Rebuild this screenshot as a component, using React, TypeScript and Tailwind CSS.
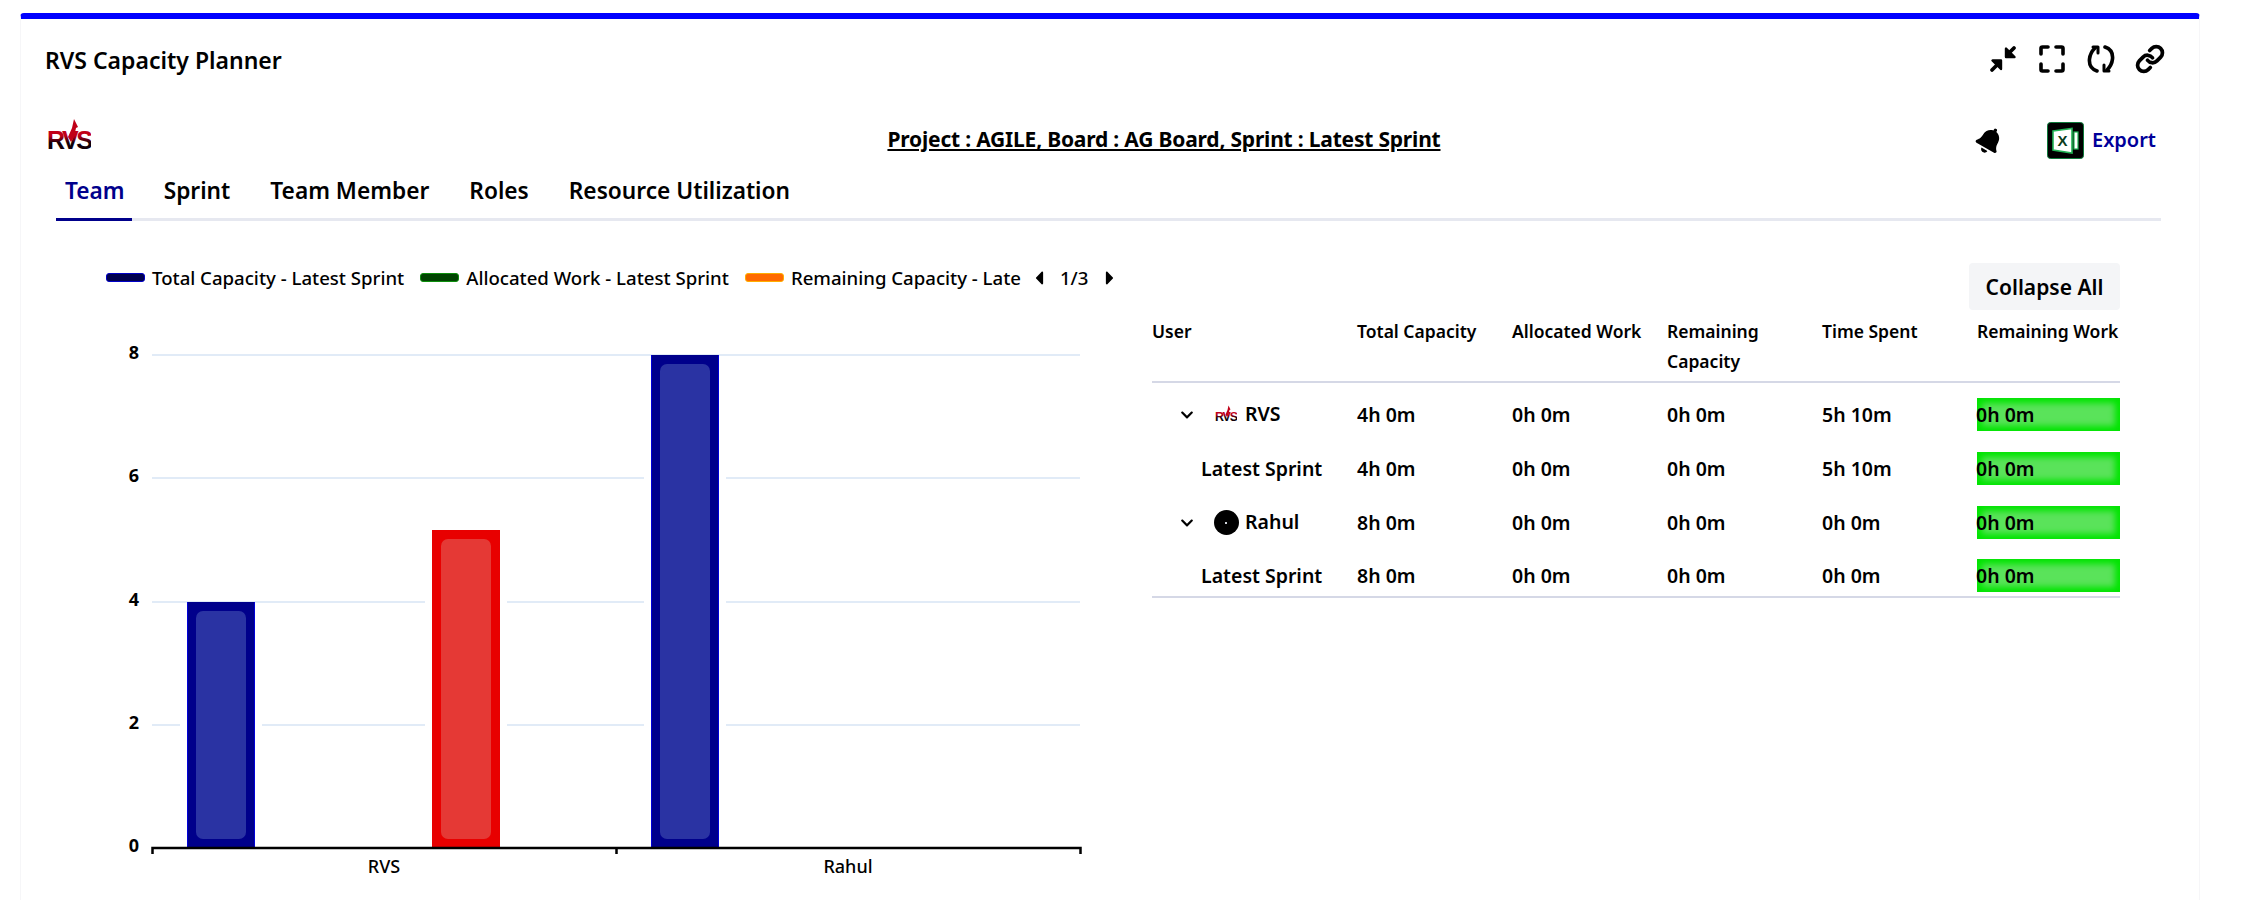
import { FaBell, FaCaretLeft, FaCaretRight, FaChevronDown } from "react-icons/fa"
import { Link as LinkIcon } from "lucide-react"

const tabs = ["Team", "Sprint", "Team Member", "Roles", "Resource Utilization"]

const legend = [
  { label: "Total Capacity - Latest Sprint", swatch: "bg-[#00004f] border-[#0000c8]" },
  { label: "Allocated Work - Latest Sprint", swatch: "bg-[#004400] border-[#0c8f0c]" },
  { label: "Remaining Capacity - Late", swatch: "bg-[#ff6a00] border-[#ffae00]" },
]

const rows = [
  { kind: "rvs", name: "RVS", total: "4h 0m", spent: "5h 10m" },
  { kind: "sprint", name: "Latest Sprint", total: "4h 0m", spent: "5h 10m" },
  { kind: "rahul", name: "Rahul", total: "8h 0m", spent: "0h 0m" },
  { kind: "sprint", name: "Latest Sprint", total: "8h 0m", spent: "0h 0m" },
]

const bars = [
  { x: 187, top: 601, edge: "#00008b", line: "#0000d8", fill: "#2a33a3" },
  { x: 432, top: 529, edge: "#e80000", line: "#e80000", fill: "#e53935" },
  { x: 651, top: 354, edge: "#00008b", line: "#0000d8", fill: "#2a33a3" },
]

const gridCols = "grid grid-cols-[205px_155px_155px_155px_155px_143px]"

function Logo({ size, id }: { size: number; id: string }) {
  return (
    <svg width={size} height={size * 0.82} viewBox="0 0 44 36">
      <defs>
        <linearGradient id={id} x1="0" y1="0" x2="0" y2="1">
          <stop offset="0.35" stopColor="#c00018" />
          <stop offset="0.6" stopColor="#120008" />
        </linearGradient>
      </defs>
      <text x="0" y="31" letterSpacing="-2.5" fontFamily="Liberation Sans, sans-serif" fontWeight="700" fontSize="25" fill={`url(#${id})`}>RVS</text>
      <path d="M21 19 L25 10 L27 1 L31 9 L29 10 L27 19 L24 24 Z" fill="#c00018" />
    </svg>
  )
}

function ExcelIcon() {
  return (
    <svg width="37" height="37" viewBox="0 0 37 37">
      <rect x="0.5" y="0.5" width="36" height="36" rx="3" fill="#000" stroke="#0d7a3a" />
      <path d="M6 9 L25 6.5 V31 L6 28 Z" fill="#fff" stroke="#22b455" strokeWidth="1.6" />
      <rect x="27" y="10" width="4" height="17" fill="#fff" stroke="#22b455" strokeWidth="1.2" />
      <text x="15.5" y="24" textAnchor="middle" fontFamily="Liberation Sans, sans-serif" fontWeight="700" fontSize="15" fill="#0b3d1d">X</text>
    </svg>
  )
}

function HeaderIcons() {
  return (
    <div className="flex items-center gap-[22px] text-black">
      <svg width="28" height="28" viewBox="0 0 28 28" fill="none" stroke="currentColor" strokeWidth="3.8" strokeLinecap="round" strokeLinejoin="round">
        <path d="M3 25 L10 18" />
        <path d="M3.5 15.5 H12 V24 Z" fill="currentColor" strokeWidth="2.4" />
        <path d="M25 3 L18 10" />
        <path d="M17 3.5 V12 H25.5 Z" fill="currentColor" strokeWidth="2.4" />
      </svg>
      <svg width="26" height="28" viewBox="0 0 26 28" fill="none" stroke="currentColor" strokeWidth="3.6" strokeLinecap="round" strokeLinejoin="round">
        <path d="M2 9 V3.5 Q2 2 3.5 2 H9" />
        <path d="M17 2 H22.5 Q24 2 24 3.5 V9" />
        <path d="M24 19 V24.5 Q24 26 22.5 26 H17" />
        <path d="M9 26 H3.5 Q2 26 2 24.5 V19" />
      </svg>
      <svg width="28" height="28" viewBox="0 0 28 28" fill="none" stroke="currentColor" strokeWidth="3.6" strokeLinecap="round" strokeLinejoin="round">
        <path d="M10 26 C4 24 2 19 2.5 14 C3 9 5 6 8 3" />
        <path d="M6 2 H11 V8" strokeWidth="3" />
        <path d="M18 2 C24 4 26 9 25.5 14 C25 19 23 22 20 25" />
        <path d="M22 26 H17 V20" strokeWidth="3" />
      </svg>
      <LinkIcon size={30} strokeWidth={3} className="-ml-[2px]" />
    </div>
  )
}

function Chart() {
  const grid = [354, 477, 601, 724]
  const labels = [
    { y: 354, v: "8" },
    { y: 477, v: "6" },
    { y: 601, v: "4" },
    { y: 724, v: "2" },
    { y: 847, v: "0" },
  ]
  return (
    <svg width="1107" height="560" viewBox="45 330 1107 560" className="block">
      {grid.map((y) => (
        <line key={y} x1="152" x2="1080" y1={y} y2={y} stroke="#e1ebf7" strokeWidth="2" />
      ))}
      {bars.map((b) => (
        <g key={b.x}>
          <rect x={b.x - 7} y={b.top + 1} width="82" height={846 - b.top} fill="#fff" />
          <rect x={b.x} y={b.top} width="68" height={847 - b.top} fill={b.line} />
          <rect x={b.x + 1} y={b.top} width="66" height={847 - b.top} fill={b.edge} />
          <rect x={b.x + 9} y={b.top + 9} width="50" height={829 - b.top} rx="7" fill={b.fill} />
        </g>
      ))}
      <path d="M152.5 853 V847 H1080.5 V853 M616.5 847 V853" fill="none" stroke="#000" strokeWidth="2.5" />
      {labels.map((l) => (
        <text key={l.v} x="139" y={l.y - 1} textAnchor="end" dominantBaseline="middle" fontFamily="Noto Sans, sans-serif" fontWeight="700" fontSize="18" fill="#000">
          {l.v}
        </text>
      ))}
      <text x="384" y="872" textAnchor="middle" fontFamily="Noto Sans, sans-serif" fontWeight="500" fontSize="18" fill="#000">RVS</text>
      <text x="848" y="872" textAnchor="middle" fontFamily="Noto Sans, sans-serif" fontWeight="500" fontSize="18" fill="#000">Rahul</text>
    </svg>
  )
}

function UserCell({ kind, name }: { kind: string; name: string }) {
  if (kind === "sprint") {
    return <div className="pl-[49px] leading-[33px]">{name}</div>
  }
  return (
    <div className="flex h-[33px] items-center pl-[28px]">
      <FaChevronDown size={14} />
      <div className="ml-[19px] flex w-[26px] justify-center">
        {kind === "rvs" ? <Logo size={22} id="logo-small" /> : (
          <span className="flex h-[25px] w-[25px] items-center justify-center rounded-full bg-black">
            <span className="h-[2px] w-[2px] bg-gray-300" />
          </span>
        )}
      </div>
      <span className="ml-[6px] -mt-[2px]">{name}</span>
    </div>
  )
}

export default function App() {
  return (
    <div className="h-[900px] overflow-hidden bg-white pl-5 pr-[44px] pt-[13px] font-['Noto_Sans',sans-serif] text-black">
      <div className="h-[887px] rounded-t-[4px] border-x border-t-[6px] border-x-[#f6f6f8] border-t-[#0000ff] px-[24px]">
        <div className="flex h-[101px] items-start justify-between pr-[10px] pt-[25px]">
          <h1 className="text-[23px] font-semibold leading-[32px]">RVS Capacity Planner</h1>
          <HeaderIcons />
        </div>

        <div className="flex h-[40px] items-center">
          <div className="ml-[2px] mt-[-8px]">
            <Logo size={44} id="logo-large" />
          </div>
          <div className="flex flex-1 justify-center pl-[261px]">
            <span className="text-[21px] font-bold tracking-[-0.2px] underline underline-offset-2">Project : AGILE, Board : AG Board, Sprint : Latest Sprint</span>
          </div>
          <div className="flex items-center">
            <FaBell size={27} className="mr-[44px] rotate-[30deg]" />
            <ExcelIcon />
            <span className="ml-[8px] mr-[19px] text-[20px] font-semibold text-[#000099]">Export</span>
          </div>
        </div>

        <div className="ml-[11px] mr-[14px] flex h-[61px] border-b-[3px] border-[#e6e8f0]">
          {tabs.map((tab, i) => (
            <div
              key={tab}
              className={
                i === 0
                  ? "-mb-[3px] mr-[32px] border-b-[3px] border-[#00008b] pl-[9px] pr-[7px] pt-[13px] text-[22.7px] font-semibold leading-[36px] text-[#00008b]"
                  : "mr-[40px] pt-[13px] text-[22.7px] font-semibold leading-[36px]"
              }
            >
              {tab}
            </div>
          ))}
        </div>

        <div className="mt-[42px] flex">
          <div className="w-[1107px]">
            <div className="flex h-[30px] items-center pl-[61px] text-[18.6px] font-medium">
              {legend.map((item) => (
                <div key={item.label} className="mr-[16px] flex items-center">
                  <span className={`mr-[7px] h-[9px] w-[39px] rounded-[3px] border ${item.swatch}`} />
                  <span className="whitespace-nowrap">{item.label}</span>
                </div>
              ))}
              <FaCaretLeft size={22} className="ml-[-9px]" />
              <span className="ml-[10px] mr-[11px]">1/3</span>
              <FaCaretRight size={22} />
            </div>
            <div className="mt-[38px]">
              <Chart />
            </div>
          </div>

          <div className="w-[968px]">
            <div className="flex justify-end">
              <button className="h-[47px] w-[151px] rounded-[4px] bg-[#f4f5f7] pt-[2px] text-[21px] font-semibold">Collapse All</button>
            </div>
            <div className={`${gridCols} border-b-2 border-[#d5d8e6] pb-[5px] pt-[6px] text-[17.5px] font-semibold leading-[30px]`}>
              <div>User</div>
              <div>Total Capacity</div>
              <div>Allocated Work</div>
              <div className="pr-[40px]">Remaining Capacity</div>
              <div>Time Spent</div>
              <div className="whitespace-nowrap">Remaining Work</div>
            </div>
            <div className="border-b-2 border-[#d5d8e6] pt-[5px]">
              {rows.map((row, i) => (
                <div key={i} className={`${gridCols} items-center pt-[10px] text-[19.5px] font-semibold ${i === 3 ? "pb-[4px]" : i === 2 ? "pb-[10px]" : "pb-[11px]"}`}>
                  <UserCell kind={row.kind} name={row.name} />
                  <div>{row.total}</div>
                  <div>0h 0m</div>
                  <div>0h 0m</div>
                  <div>{row.spent}</div>
                  <div className="h-[33px] bg-[#5ae35a] leading-[33px] shadow-[inset_0_0_6px_5px_#00e400]">
                    <span className="-ml-[1px]">0h 0m</span>
                  </div>
                </div>
              ))}
            </div>
          </div>
        </div>
      </div>
    </div>
  )
}
